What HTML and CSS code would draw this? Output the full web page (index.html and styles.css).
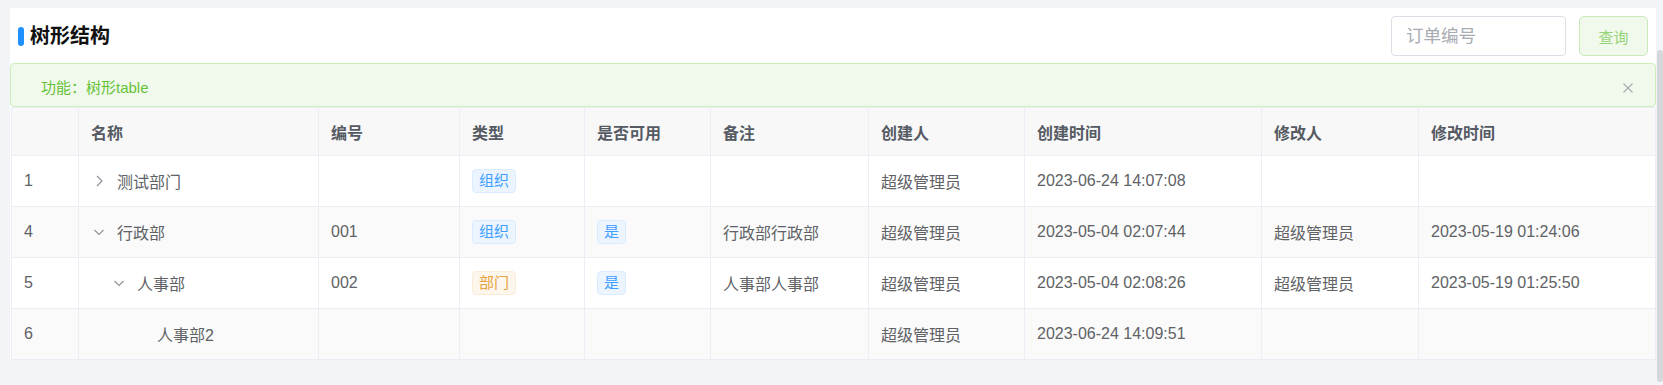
FILE: index.html
```html
<!DOCTYPE html>
<html lang="zh-CN">
<head>
    <meta charset="UTF-8">
    <meta name="viewport" content="width=device-width, initial-scale=1.0">
    <title>树形结构</title>
    <link rel="stylesheet" href="styles.css">
</head>
<body>
    <div class="page-card">
        <div class="card-header">
            <h2 class="card-title">树形结构</h2>
            <div class="search-bar">
                <input class="search-input" type="text" placeholder="订单编号">
                <button class="btn-search">查询</button>
            </div>
        </div>

        <div class="alert-success">
            <span>功能：树形table</span>
            <svg class="alert-close" width="10" height="10" viewBox="0 0 10 10">
                <path d="M0.5 0.5 L9.5 9.5 M9.5 0.5 L0.5 9.5" stroke="#a8abb2" stroke-width="1.1" fill="none"/>
            </svg>
        </div>

        <div class="tree-table">
            <div class="tr thead">
                <div class="td"></div>
                <div class="td">名称</div>
                <div class="td">编号</div>
                <div class="td">类型</div>
                <div class="td">是否可用</div>
                <div class="td">备注</div>
                <div class="td">创建人</div>
                <div class="td">创建时间</div>
                <div class="td">修改人</div>
                <div class="td">修改时间</div>
            </div>

            <div class="tr">
                <div class="td">1</div>
                <div class="td tree-cell">
                    <svg class="tree-icon" width="16" height="16" viewBox="0 0 16 16">
                        <path d="M6 3 L11 8 L6 13" stroke="#909399" stroke-width="1.2" fill="none"/>
                    </svg>
                    测试部门
                </div>
                <div class="td"></div>
                <div class="td"><span class="tag">组织</span></div>
                <div class="td"></div>
                <div class="td"></div>
                <div class="td">超级管理员</div>
                <div class="td">2023-06-24 14:07:08</div>
                <div class="td"></div>
                <div class="td"></div>
            </div>

            <div class="tr striped">
                <div class="td">4</div>
                <div class="td tree-cell">
                    <svg class="tree-icon" width="16" height="16" viewBox="0 0 16 16">
                        <path d="M3.5 6 L8 10.5 L12.5 6" stroke="#909399" stroke-width="1.2" fill="none"/>
                    </svg>
                    行政部
                </div>
                <div class="td">001</div>
                <div class="td"><span class="tag">组织</span></div>
                <div class="td"><span class="tag">是</span></div>
                <div class="td">行政部行政部</div>
                <div class="td">超级管理员</div>
                <div class="td">2023-05-04 02:07:44</div>
                <div class="td">超级管理员</div>
                <div class="td">2023-05-19 01:24:06</div>
            </div>

            <div class="tr">
                <div class="td">5</div>
                <div class="td tree-cell level-1">
                    <svg class="tree-icon" width="16" height="16" viewBox="0 0 16 16">
                        <path d="M3.5 6 L8 10.5 L12.5 6" stroke="#909399" stroke-width="1.2" fill="none"/>
                    </svg>
                    人事部
                </div>
                <div class="td">002</div>
                <div class="td"><span class="tag tag-warning">部门</span></div>
                <div class="td"><span class="tag">是</span></div>
                <div class="td">人事部人事部</div>
                <div class="td">超级管理员</div>
                <div class="td">2023-05-04 02:08:26</div>
                <div class="td">超级管理员</div>
                <div class="td">2023-05-19 01:25:50</div>
            </div>

            <div class="tr striped">
                <div class="td">6</div>
                <div class="td tree-cell level-2">
                    <span class="tree-icon"></span>
                    人事部2
                </div>
                <div class="td"></div>
                <div class="td"></div>
                <div class="td"></div>
                <div class="td"></div>
                <div class="td">超级管理员</div>
                <div class="td">2023-06-24 14:09:51</div>
                <div class="td"></div>
                <div class="td"></div>
            </div>
        </div>
    </div>

    <div class="scroll-thumb"></div>
</body>
</html>
```

FILE: styles.css
```css
* {
    box-sizing: border-box;
}

body {
    margin: 0;
    padding: 8px 7px 0 10px;
    background-color: #f2f4f8;
    font-family: "Liberation Sans", "Noto Sans CJK SC", sans-serif;
    color: #606266;
}

.page-card {
    background-color: #fff;
}

.card-header {
    display: flex;
    align-items: center;
    justify-content: space-between;
    padding: 8px 8px 7px 8px;
}

.card-title {
    display: flex;
    align-items: center;
    margin: 0;
    font-size: 20px;
    line-height: 24px;
    font-weight: bold;
    color: #111;
}

.card-title::before {
    content: "";
    width: 6px;
    height: 19px;
    margin-right: 6px;
    border-radius: 3px;
    background-color: #1e90ff;
}

.search-bar {
    display: flex;
    gap: 13px;
}

.search-input {
    width: 175px;
    height: 40px;
    padding: 0 14px;
    border: 1px solid #dcdfe6;
    border-radius: 4px;
    font-family: inherit;
    font-size: 17.5px;
    color: #606266;
    outline: none;
}

.search-input::placeholder {
    color: #a8abb2;
}

.btn-search {
    width: 69px;
    height: 40px;
    border: 1px solid #c8eab8;
    border-radius: 5px;
    background-color: #f0f9eb;
    color: #95d475;
    font-family: inherit;
    font-size: 15px;
}

.alert-success {
    display: flex;
    align-items: center;
    justify-content: space-between;
    padding: 13px 22px 7px 30px;
    border: 1px solid #cdeebb;
    border-radius: 4px;
    background-color: #f0f9eb;
    color: #67c23a;
    font-size: 15px;
    line-height: 22px;
}

.tree-table {
    margin-left: 1px;
    border-top: 1px solid #ebeef5;
    border-left: 1px solid #ebeef5;
    font-size: 16px;
}

.tr {
    display: grid;
    grid-template-columns: 67px 240px 141px 125px 126px 158px 156px 237px 157px 1fr;
    height: 51px;
}

.td {
    display: flex;
    align-items: center;
    padding: 0 12px;
    border-right: 1px solid #ebeef5;
    border-bottom: 1px solid #ebeef5;
    white-space: nowrap;
}

.thead {
    height: 48px;
}

.thead .td {
    background-color: #f8f8f9;
    font-weight: bold;
    color: #555a63;
}

.striped .td {
    background-color: #fafafa;
}

.tree-icon {
    flex: none;
    width: 16px;
    height: 16px;
    margin-right: 10px;
}

.level-1 {
    padding-left: 32px;
}

.level-2 {
    padding-left: 52px;
}

.tag {
    display: inline-flex;
    align-items: center;
    height: 24px;
    padding: 0 6px;
    border: 1px solid #d9ecff;
    border-radius: 4px;
    background-color: #ecf5ff;
    color: #409eff;
    font-size: 15px;
    line-height: 22px;
}

.tag-warning {
    border-color: #faecd8;
    background-color: #fdf6ec;
    color: #e6a23c;
}

.scroll-thumb {
    position: absolute;
    top: 50px;
    right: 0;
    width: 6px;
    height: 332px;
    border-radius: 3px;
    background-color: #d5d7dc;
}
```
